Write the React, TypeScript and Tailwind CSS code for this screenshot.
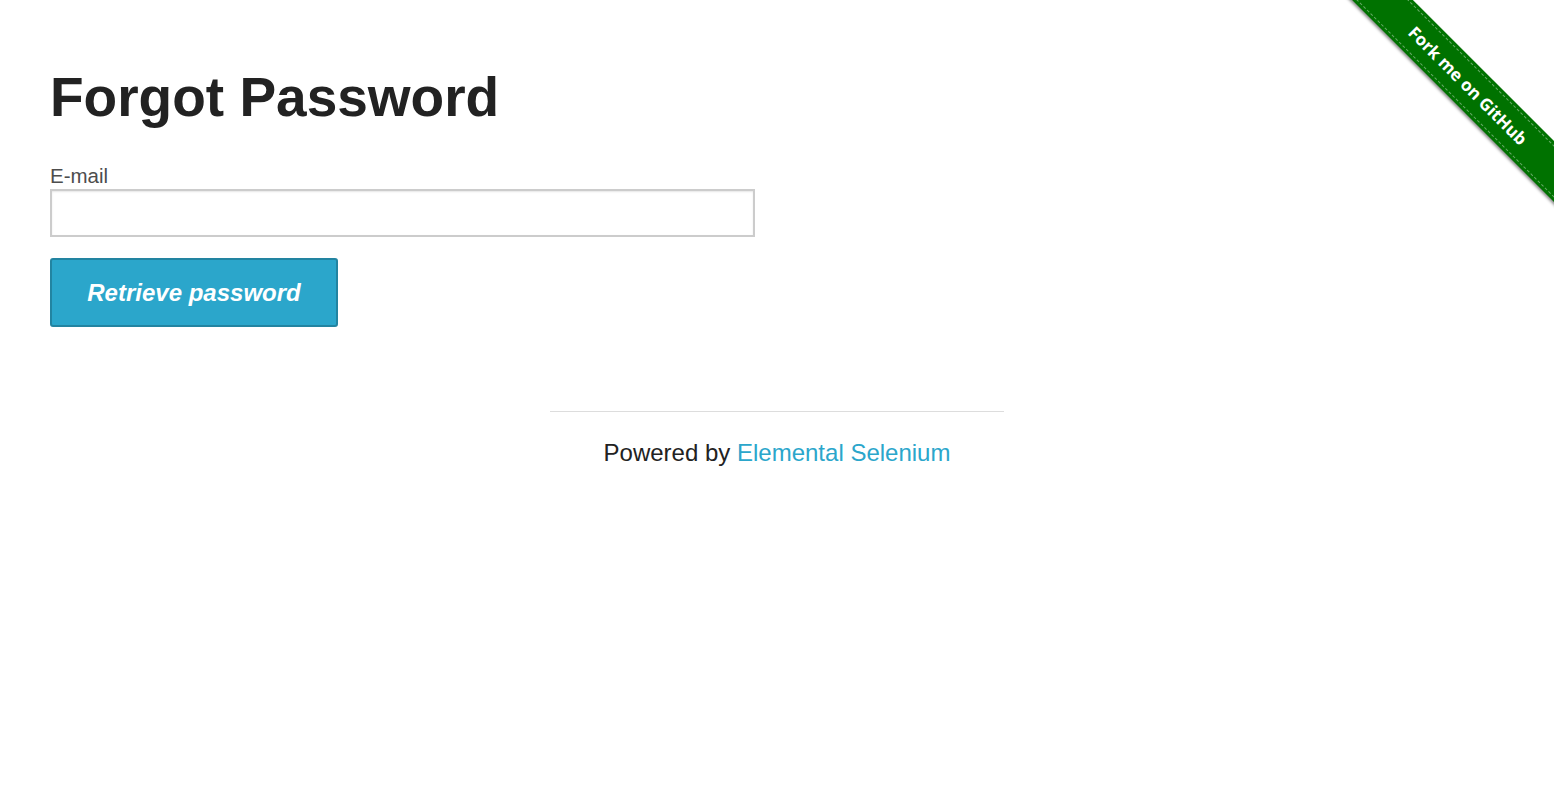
export default function App() {
  return (
    <div className="relative min-h-screen overflow-hidden bg-white font-['Liberation_Sans',Arial,sans-serif] text-[#222]">
      <ForkRibbon />

      <div className="px-[50px] pt-[64px]">
        <h1 className="text-[55px] font-bold leading-[66px] text-[#222]">Forgot Password</h1>

        <form className="mt-[34px] flex flex-col" onSubmit={(e) => e.preventDefault()}>
          <label htmlFor="email" className="mb-[1px] text-[20.5px] leading-[24px] text-[#4d4d4d]">
            E-mail
          </label>
          <input
            id="email"
            type="text"
            className="h-[48px] w-[705px] border-2 border-[#ccc] bg-white px-3 text-[21px] shadow-[inset_0_1px_2px_rgba(0,0,0,0.1)] outline-none"
          />
          <button
            type="submit"
            className="mt-[21px] h-[69px] w-[288px] rounded-[3px] border-2 border-[#2284a1] bg-[#2ba6cb] text-[24px] font-bold italic text-white"
          >
            Retrieve password
          </button>
        </form>
      </div>

      <div className="mt-[84px] flex flex-col items-center">
        <hr className="w-[454px] border-0 border-t border-[#ddd]" />
        <p className="mt-[26px] text-[24px] leading-[30px] text-[#222]">
          Powered by{' '}
          <a href="#" className="text-[#2ba6cb]">
            Elemental Selenium
          </a>
        </p>
      </div>
    </div>
  );
}

// ribbon sits over the page corner
function ForkRibbon() {
  return (
    <a href="#" className="absolute right-0 top-0 z-10 block h-[224px] w-[224px] overflow-hidden">
      <div className="absolute left-[-22px] top-[64px] flex h-[43px] w-[320px] rotate-45 items-center justify-center bg-[#007200] shadow-[0_2px_3px_rgba(0,0,0,0.45)]">
        <div className="flex h-[37px] w-full items-center justify-center border-y border-dashed border-white/40">
          <span className="font-['Noto_Sans',sans-serif] text-[17px] font-bold text-white">
            Fork me on GitHub
          </span>
        </div>
      </div>
    </a>
  );
}
